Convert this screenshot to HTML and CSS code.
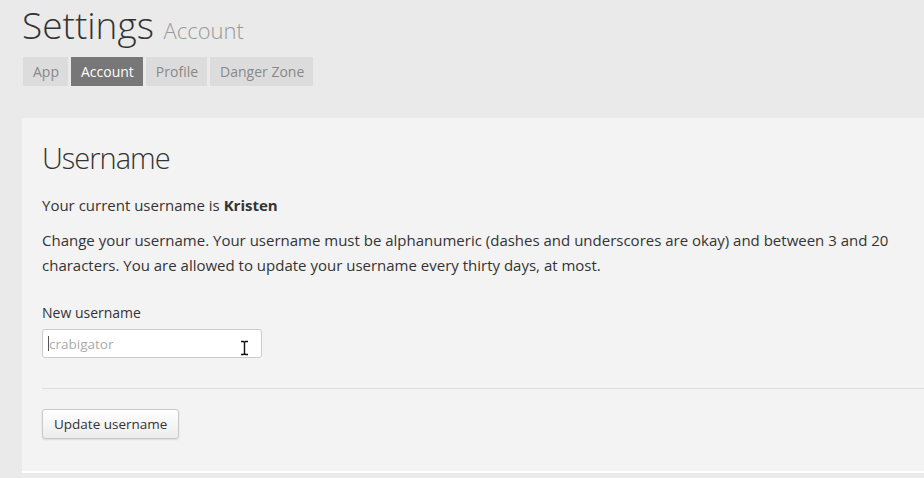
FILE: index.html
```html
<!DOCTYPE html>
<html>
<head>
<meta charset="utf-8">
<link rel="stylesheet" href="styles.css">
</head>
<body>
<div class="page">
  <header class="head">
    <h1 class="title">Settings <small class="sub">Account</small></h1>
    <nav class="tabs">
      <a class="tab">App</a>
      <a class="tab active">Account</a>
      <a class="tab">Profile</a>
      <a class="tab">Danger Zone</a>
    </nav>
  </header>
  <section class="card">
    <h2 class="heading">Username</h2>
    <p class="current">Your current username is <strong>Kristen</strong></p>
    <p class="desc">Change your username. Your username must be alphanumeric (dashes and underscores are okay) and between 3 and 20 characters. You are allowed to update your username every thirty days, at most.</p>
    <label class="label">New username</label>
    <div class="field">
      <span class="caret"></span><span class="placeholder">crabigator</span>
      <svg class="ibeam" width="9" height="16" viewBox="0 0 9 16"><path d="M1 1.5h2.5l1 1 1-1H8M4.5 2.5v11M1 14.5h2.5l1-1 1 1H8" fill="none" stroke="#fff" stroke-width="3"/><path d="M1 1.5h2.5l1 1 1-1H8M4.5 2.5v11M1 14.5h2.5l1-1 1 1H8" fill="none" stroke="#111" stroke-width="1.4"/></svg>
    </div>
    <hr class="rule">
    <button class="btn">Update username</button>
  </section>
</div>
</body>
</html>
```
FILE: styles.css
```css
html, body {
  margin: 0;
  padding: 0;
  background: #eaeaea;
  overflow: hidden;
}
body {
  font-family: "Open Sans", "Noto Sans", sans-serif;
  color: #333;
  width: 924px;
  height: 478px;
}
.page {
  padding: 0 0 0 22px;
}
.title {
  margin: 0;
  font-weight: 300;
  font-size: 37px;
  line-height: 50px;
  color: #333;
  white-space: nowrap;
}
.sub {
  font-size: 22px;
  font-weight: 300;
  color: #999;
}
.tabs {
  display: flex;
  gap: 3px;
  margin-top: 2px;
  padding-left: 1px;
}
.tab {
  display: block;
  height: 29px;
  line-height: 29px;
  padding: 0 9px 0 10px;
  background: #dcdcdc;
  color: #888;
  font-size: 14px;
}
.tab.active {
  background: #777;
  color: #fff;
}
.card {
  margin-top: 32px;
  width: 940px;
  height: 355px;
  box-sizing: border-box;
  background: #f3f3f3;
  border-bottom: 2px solid #fff;
  padding: 22px 0 0 20px;
}
.heading {
  margin: 0;
  font-size: 29px;
  font-weight: 300;
  line-height: 36px;
  letter-spacing: -1px;
  color: #333;
}
.current {
  margin: 17px 0 0;
  font-size: 15px;
  line-height: 25px;
}
.desc {
  margin: 10px 0 0;
  font-size: 15px;
  line-height: 25px;
  width: 880px;
}
.label {
  display: block;
  margin-top: 25px;
  font-size: 14px;
  line-height: 20px;
}
.field {
  position: relative;
  margin-top: 6px;
  width: 220px;
  height: 29px;
  box-sizing: border-box;
  background: #fff;
  border: 1px solid #ccc;
  border-radius: 3px;
  display: flex;
  align-items: center;
  padding-left: 5px;
}
.caret {
  width: 1px;
  height: 15px;
  background: #555;
}
.placeholder {
  color: #aaa;
  font-size: 13.5px;
}
.ibeam {
  position: absolute;
  left: 197px;
  top: 10px;
}
.rule {
  margin: 30px 0 0;
  border: 0;
  border-top: 1px solid #ddd;
  height: 0;
}
.btn {
  margin-top: 20px;
  height: 30px;
  padding: 0 11px;
  font-family: inherit;
  font-size: 13.5px;
  color: #333;
  background: linear-gradient(#fff, #ececec);
  border: 1px solid #c8c8c8;
  border-radius: 3px;
  box-shadow: 0 1px 2px rgba(0,0,0,0.1);
}
```
